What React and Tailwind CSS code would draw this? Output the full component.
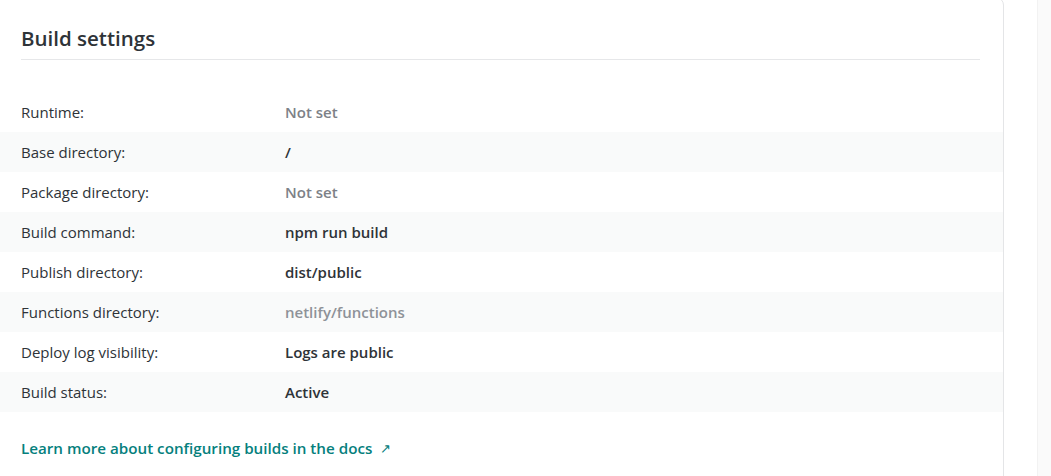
const rows = [
  { label: 'Runtime:', value: 'Not set', muted: true },
  { label: 'Base directory:', value: '/' },
  { label: 'Package directory:', value: 'Not set', muted: true },
  { label: 'Build command:', value: 'npm run build' },
  { label: 'Publish directory:', value: 'dist/public' },
  { label: 'Functions directory:', value: 'netlify/functions', muted: true, light: true },
  { label: 'Deploy log visibility:', value: 'Logs are public' },
  { label: 'Build status:', value: 'Active' },
];

export default function App() {
  return (
    <div className="flex h-[476px] overflow-hidden bg-white" style={{ fontFamily: '"Open Sans", "Noto Sans", sans-serif' }}>
      <div className="flex-1 min-w-0">
        {/* Card */}
        <section className="-mt-[3px] -ml-px w-[1005px] h-[600px] rounded-tr-lg border border-[#e4e5e7] bg-white">
          <div className="pl-[21px] pr-[23px] pt-[24px]">
            <h2 className="text-[20.5px] leading-[32px] font-semibold text-[#2e3338] pb-[5px] border-b border-[#e6e7e9]">
              Build settings
            </h2>
          </div>

          <dl className="mt-[32px]">
            {rows.map((r, i) => (
              <div key={r.label} className={`flex items-center h-10 pl-[21px] ${i % 2 === 1 ? 'bg-[#f9fafa]' : ''}`}>
                <dt className="w-[264px] text-[15px] text-[#2e3338]">{r.label}</dt>
                <dd className={`text-[15px] font-semibold ${r.muted ? (r.light ? 'text-[#8e9298]' : 'text-[#7d8187]') : 'text-[#2e3338]'}`}>
                  {r.value}
                </dd>
              </div>
            ))}
          </dl>

          <div className="pl-[21px] pt-[24px]">
            <a href="#" className="inline-flex items-center gap-[8px] text-[15.2px] font-semibold text-[#05807d]">
              Learn more about configuring builds in the docs
              <span className="text-[13px] font-normal">↗</span>
            </a>
          </div>
        </section>
      </div>

      {/* Scrollbar track */}
      <div className="w-[14px] shrink-0 bg-[#fafafa] border-l border-[#f2f2f2]" />
    </div>
  );
}
